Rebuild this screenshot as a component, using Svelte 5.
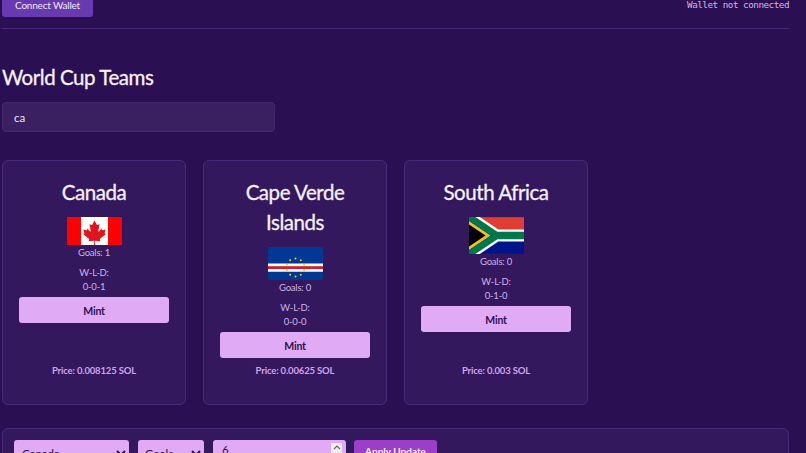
<script>
    const teams = [
        { name: 'Canada', flag: 'ca', goals: 1, record: '0-0-1', price: '0.008125' },
        { name: 'Cape Verde Islands', flag: 'cv', goals: 0, record: '0-0-0', price: '0.00625' },
        { name: 'South Africa', flag: 'za', goals: 0, record: '0-1-0', price: '0.003' }
    ];

    const stars = Array.from({ length: 10 }, (_, i) => {
        const a = (i * Math.PI) / 5 + Math.PI / 10;
        return { x: 27.5 + 9 * Math.cos(a), y: 20.5 + 9 * Math.sin(a) };
    });
</script>

<main class="page">
    <header class="topbar">
        <button class="connect">Connect Wallet</button>
        <span class="status">Wallet not connected</span>
    </header>

    <h2 class="heading">World Cup Teams</h2>
    <input class="search" type="text" value="ca" />

    <div class="grid">
        {#each teams as team}
            <article class="card">
                <h3>{team.name}</h3>
                {#if team.flag === 'ca'}
                    <svg class="flag" width="55" height="28" viewBox="0 0 55 28">
                        <rect width="55" height="28" fill="#f00" />
                        <rect x="14" width="27" height="28" fill="#fff" />
                        <path fill="#e0141c" d="M27.5 3.5l-2.3 4.2c-.3.4-.7.4-1.1.2l-1.7-.9 1.3 6.700c.2.9-.5 1-.9.5l-2.400-2.700-.4 1.400c0 .2-.3.400-.6.300l-3-.6.800 2.900c.2.600.300.900-.2 1.100l-1 .5 5.900 4.700c.2.200.3.500.2.800l-.5 1.700 5.200-.6c.2 0 .4.100.4.300l-.3 5.100h1.200l-.3-5.100c0-.2.200-.3.400-.3l5.200.6-.5-1.700c-.1-.3 0-.6.200-.8l5.900-4.700-1-.5c-.5-.2-.4-.5-.2-1.100l.8-2.900-3 .6c-.3.100-.6-.1-.6-.3l-.4-1.400-2.400 2.700c-.4.500-1.100.4-.9-.5l1.300-6.700-1.700.9c-.4.200-.8.200-1.100-.2z" />
                    </svg>
                {:else if team.flag === 'cv'}
                    <svg class="flag" width="55" height="33" viewBox="0 0 55 33">
                        <rect width="55" height="33" fill="#003893" />
                        <rect y="16.500" width="55" height="8.250" fill="#fff" />
                        <rect y="19.200" width="55" height="2.800" fill="#cf2027" />
                        {#each stars as s}
                            <circle cx={s.x} cy={s.y} r="1" fill="#f7d116" />
                        {/each}
                    </svg>
                {:else}
                    <svg class="flag" width="55" height="37" viewBox="0 0 90 60">
                        <rect width="90" height="30" fill="#e03c31" />
                        <rect y="30" width="90" height="30" fill="#001489" />
                        <path d="M0 0L45 30H90M0 60L45 30" fill="none" stroke="#fff" stroke-width="20" />
                        <path d="M0 0L45 30H90M0 60L45 30" fill="none" stroke="#007749" stroke-width="12" />
                        <path d="M0 7.200L34.200 30 0 52.800z" fill="#ffb81c" />
                        <path d="M0 12L27 30 0 48z" fill="#000" />
                    </svg>
                {/if}
                <p class="stat">Goals: {team.goals}</p>
                <p class="stat record">W-L-D:<br />{team.record}</p>
                <button class="mint">Mint</button>
                <p class="price">Price: {team.price} SOL</p>
            </article>
        {/each}
    </div>

    <section class="admin">
        <select class="control team-select"><option>Canada</option></select>
        <select class="control stat-select"><option>Goals</option></select>
        <div class="control number">
            <span>6</span>
            <span class="spin">
                <svg width="8" height="5" viewBox="0 0 8 5"><path d="M1 4l3-3 3 3" fill="none" stroke="#666" stroke-width="1.200" /></svg>
            </span>
        </div>
        <button class="apply">Apply Update</button>
    </section>
</main>

<style>
    :global(body) {
        background: #2a1052;
        overflow: hidden;
    }

    .page {
        box-sizing: border-box;
        width: 806px;
        height: 453px;
        overflow: hidden;
        padding: 0 17px 0 2px;
        font-family: Lato, "Open Sans", sans-serif;
        color: #e0aaf5;
    }

    .topbar {
        display: flex;
        justify-content: space-between;
        align-items: flex-start;
        height: 28px;
        border-bottom: 1px solid #4a2a78;
    }

    .connect {
        height: 24px;
        width: 91px;
        margin-top: -7px;
        padding: 0;
        border: none;
        border-radius: 3px;
        background: #673ab0;
        color: #f0e6fa;
        font-family: inherit;
        font-size: 10px;
        letter-spacing: -0.200px;
    }

    .status {
        font-family: "DejaVu Sans Mono", monospace;
        font-size: 9.300px;
        letter-spacing: -0.500px;
        line-height: 10px;
        color: #d8b0ec;
    }

    .heading {
        margin: 34px 0 0;
        font-size: 20.500px;
        letter-spacing: -0.450px;
        -webkit-text-stroke: 0.300px #f7f0fc;
        line-height: 28px;
        font-weight: 400;
        color: #f7f0fc;
    }

    .search {
        display: block;
        box-sizing: border-box;
        width: 273px;
        height: 30px;
        margin-top: 11px;
        padding: 0 11px;
        border: 1px solid #46286f;
        border-radius: 4px;
        background: #3b2061;
        color: #ebe0f5;
        font-family: inherit;
        font-size: 11.500px;
    }

    .grid {
        display: flex;
        gap: 17px;
        margin-top: 28px;
    }

    .card {
        box-sizing: border-box;
        width: 184px;
        height: 245px;
        padding: 16px;
        display: flex;
        flex-direction: column;
        align-items: center;
        background: #33185e;
        border: 1px solid #4a2a78;
        border-radius: 6px;
    }

    h3 {
        margin: 0 0 10px;
        font-size: 20.500px;
        letter-spacing: -0.450px;
        -webkit-text-stroke: 0.300px #f7f0fc;
        line-height: 30px;
        font-weight: 400;
        text-align: center;
        color: #f7f0fc;
    }

    .flag {
        display: block;
        flex: none;
    }

    .stat {
        margin: 1px 0 0;
        font-size: 9.500px;
        letter-spacing: -0.200px;
        line-height: 14px;
        text-align: center;
        color: #cfb2e6;
    }

    .record {
        margin-top: 6px;
    }

    .mint {
        flex: none;
        width: 150px;
        height: 26px;
        margin-top: 3px;
        padding: 1px 0 0;
        border: none;
        border-radius: 3px;
        background: #e0aaf5;
        color: #2a1052;
        font-family: inherit;
        font-size: 10.500px;
        letter-spacing: -0.250px;
        font-weight: 700;
    }

    .price {
        margin: auto 0 10px;
        font-size: 9.500px;
        letter-spacing: -0.150px;
        line-height: 14px;
        font-weight: 700;
        color: #d0a4ec;
    }

    .admin {
        display: flex;
        gap: 9px;
        box-sizing: border-box;
        height: 60px;
        margin-top: 23px;
        padding: 11px;
        background: #33185e;
        border: 1px solid #4a2a78;
        border-radius: 6px;
    }

    .control {
        box-sizing: border-box;
        height: 26px;
        border: none;
        border-radius: 3px;
        background: #e0aaf5;
        color: #2a1052;
        font-family: inherit;
        font-size: 11.500px;
    }

    .team-select {
        width: 115px;
        padding-left: 4px;
    }

    .stat-select {
        width: 66px;
        padding-left: 3px;
    }

    .number {
        width: 133px;
        margin-right: -1px;
        padding: 3px 4px 0 9px;
        display: flex;
        justify-content: space-between;
        align-items: flex-start;
    }

    .spin {
        display: flex;
        justify-content: center;
        width: 11px;
        height: 13px;
        padding-top: 2px;
        box-sizing: border-box;
        background: #efefef;
    }

    .apply {
        width: 83px;
        height: 22px;
        padding: 0;
        border: none;
        border-radius: 3px;
        background: #9b3fc9;
        color: #f5eefb;
        font-family: inherit;
        font-size: 10px;
        font-weight: 700;
    }
</style>
